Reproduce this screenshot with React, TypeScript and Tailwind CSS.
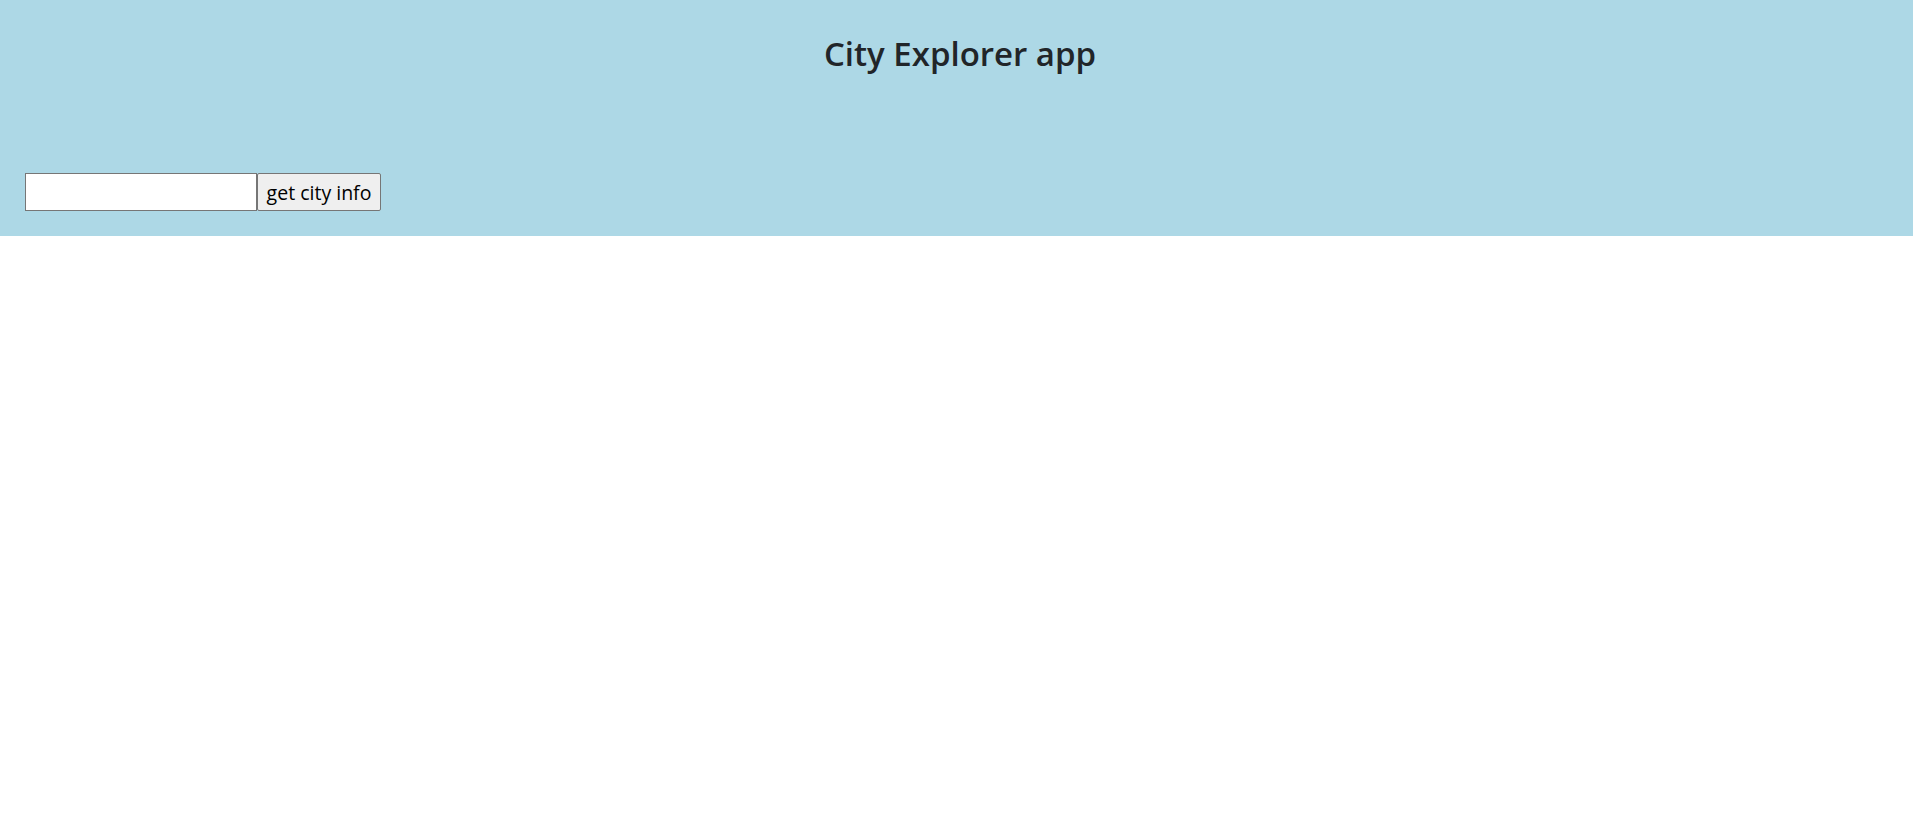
import React from "react";

export default function App() {
  return (
    <div className="min-h-[825px] bg-white" style={{ fontFamily: '"Open Sans", "Noto Sans", sans-serif' }}>
      <header className="h-[236px] bg-[#add8e6] px-[25px]">
        <h1 className="pt-[34px] pl-[7px] text-center text-[33px] font-semibold leading-[40px] text-[#212529]">
          City Explorer app
        </h1>
        <form className="mt-[99px] flex items-stretch" onSubmit={(e) => e.preventDefault()}>
          <input
            type="text"
            className="h-[38px] w-[232px] border border-[#767676] bg-white px-1 text-[19px] text-black outline-none"
          />
          <button
            type="submit"
            className="h-[38px] w-[124px] rounded-[2px] border border-[#767676] bg-[#efefef] pt-[2px] text-[19.5px] leading-none text-black"
          >
            get city info
          </button>
        </form>
      </header>
    </div>
  );
}
